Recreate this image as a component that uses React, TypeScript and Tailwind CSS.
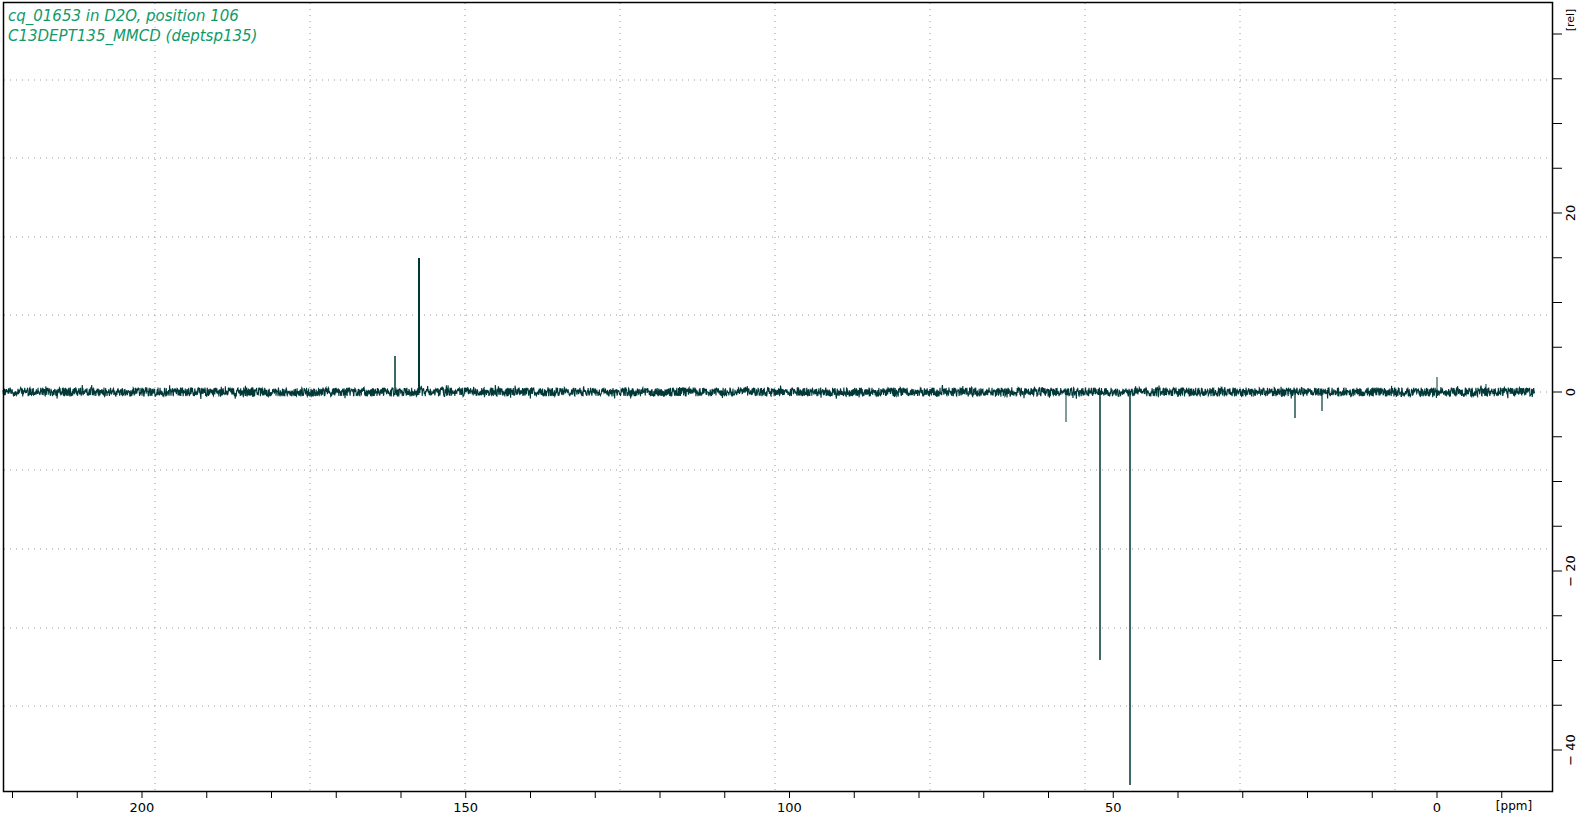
import React from "react";

const X0 = 1437;
const PX_PER_PPM = 6.475;
const Y0 = 392;
const PX_PER_REL = 8.95;

const ppmX = (p: number) => X0 - p * PX_PER_PPM;
const relY = (r: number) => Y0 - r * PX_PER_REL;

function makeNoise() {
  let seed = 12345;
  const rnd = () => {
    seed = (seed * 1103515245 + 12345) % 2147483648;
    return seed / 2147483648;
  };
  const pts: string[] = [];
  for (let x = 3; x <= 1535; x += 0.34) {
    const spike = rnd() < 0.05 ? 2.5 : 0;
    const y = Y0 + (rnd() - 0.5) * 9 + (rnd() < 0.5 ? -spike : spike);
    pts.push(`${x.toFixed(2)},${y.toFixed(1)}`);
  }
  return pts.join(" ");
}

const noise = makeNoise();

// peaks: x position, tip y, width
const peaks: [number, number, number][] = [
  [395, 356, 1.5],
  [419, 258, 2],
  [1437, 377, 1],
  [1486, 384, 1],
  [1066, 422, 1],
  [1100, 660, 1.5],
  [1130, 785, 1.5],
  [1295, 418, 1.3],
  [1322, 411, 1.2],
];

const gridX = [155, 310, 465, 620, 775, 930, 1085, 1240, 1395];
const gridY = [80, 158, 237, 315, 392, 470, 549, 628, 706];

export default function App() {
  const xTicks: number[] = [];
  for (let p = 220; p >= -10; p -= 10) xTicks.push(p);
  const yTicks: number[] = [];
  for (let r = -40; r <= 40; r += 5) yTicks.push(r);

  return (
    <div className="w-[1584px] h-[821px] bg-white overflow-hidden">
      <svg width="1584" height="821" className="block" style={{ fontFamily: "'DejaVu Sans', sans-serif" }}>
        {gridX.map((x) => (
          <line key={`gx${x}`} x1={x} y1={3} x2={x} y2={791} stroke="#9a9a9a" strokeWidth={1} strokeDasharray="1 5" />
        ))}
        {gridY.map((y) => (
          <line key={`gy${y}`} x1={4} y1={y} x2={1552} y2={y} stroke="#9a9a9a" strokeWidth={1} strokeDasharray="1 5" />
        ))}

        <polyline points={noise} fill="none" stroke="#003838" strokeWidth={1.1} />
        {peaks.map(([x, y, w]) => (
          <line key={`p${x}`} x1={x} y1={Y0} x2={x} y2={y} stroke="#003838" strokeWidth={w} />
        ))}

        <rect x={3.5} y={2.5} width={1549} height={789} fill="none" stroke="#000" strokeWidth={1.5} />

        {xTicks.map((p) => (
          <line key={`xt${p}`} x1={ppmX(p)} y1={792} x2={ppmX(p)} y2={798} stroke="#000" strokeWidth={1} />
        ))}
        {[200, 150, 100, 50, 0].map((p) => (
          <text key={`xl${p}`} x={ppmX(p)} y={808} fontSize={13} textAnchor="middle" dominantBaseline="middle" fill="#000">
            {p}
          </text>
        ))}
        <text x={1514} y={806} fontSize={12} textAnchor="middle" dominantBaseline="middle" fill="#000">
          [ppm]
        </text>

        {yTicks.map((r) =>
          relY(r) > 8 && relY(r) < 790 ? (
            <line key={`yt${r}`} x1={1553} y1={relY(r)} x2={1562} y2={relY(r)} stroke="#000" strokeWidth={1} />
          ) : null
        )}
        {[20, 0, -20, -40].map((r) => (
          <text
            key={`yl${r}`}
            x={1571}
            y={relY(r)}
            fontSize={13}
            textAnchor="middle"
            dominantBaseline="middle"
            fill="#000"
            transform={`rotate(-90 1571 ${relY(r)})`}
          >
            {r < 0 ? `− ${-r}` : r}
          </text>
        ))}
        <text x={1571} y={20} fontSize={11} textAnchor="middle" dominantBaseline="middle" fill="#000" transform="rotate(-90 1571 20)">
          [rel]
        </text>

        <text x={8} y={21} fontSize={15} fontStyle="italic" fill="#0f9a6a">
          cq_01653 in D2O, position 106
        </text>
        <text x={8} y={41} fontSize={15} fontStyle="italic" fill="#0f9a6a">
          C13DEPT135_MMCD (deptsp135)
        </text>
      </svg>
    </div>
  );
}
